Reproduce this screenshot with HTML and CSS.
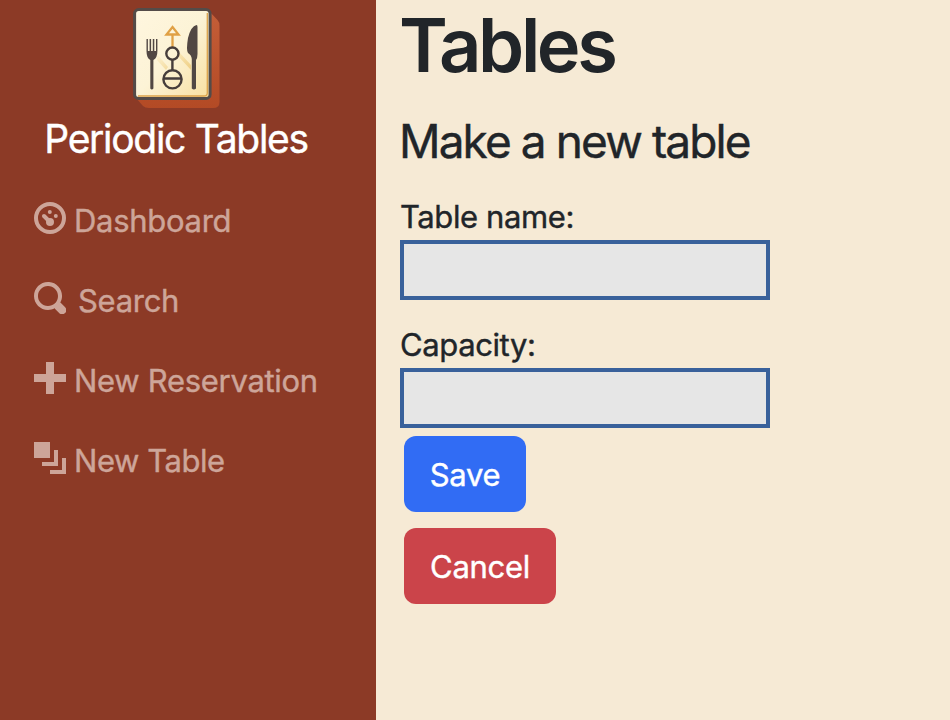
FILE: index.html
```html
<!DOCTYPE html>
<html lang="en">
<head>
<meta charset="utf-8">
<title>Periodic Tables</title>
<link rel="stylesheet" href="styles.css">
</head>
<body>
<div class="layout">
  <nav class="sidebar">
    <a class="brand">
      <svg class="logo" viewBox="0 0 105 115" width="105" height="115" aria-hidden="true">
        <defs>
          <linearGradient id="paper" x1="0" y1="0" x2="1" y2="1"><stop offset="0" stop-color="#fff6df"/><stop offset=".5" stop-color="#fcf3d6"/><stop offset="1" stop-color="#f8dfa0"/></linearGradient>
          <linearGradient id="side" x1="0" y1="0" x2="0" y2="1"><stop offset="0" stop-color="#c45e38"/><stop offset="1" stop-color="#b34a25"/></linearGradient>
          <linearGradient id="beam" x1="0" y1="0" x2="1" y2="1"><stop offset="0" stop-color="#f2d184" stop-opacity="0"/><stop offset="1" stop-color="#efcf85"/></linearGradient>
        </defs>
        <path d="M84 11 92.500 20Q94.500 22 94.500 26V102Q94.500 108 88 108H24Q20 108 18 106L11 98Z" fill="url(#side)"/>
        <rect x="9.600" y="9.600" width="75.500" height="88.800" rx="4" fill="url(#paper)" stroke="#544b48" stroke-width="3"/>
        <path d="M82.300 13V93Q82.300 96 79 96H13" fill="none" stroke="#dca34b" stroke-width="1.300"/>
        <path d="M32 54 43 67 41 70 32 60ZM54 52 66 65V70L53 56Z" fill="url(#beam)"/>
        <g fill="none" stroke="#e0a044" stroke-width="2.300"><path d="M47.500 27 53.500 34.500H41.500ZM47.500 35V48"/></g>
        <g fill="none" stroke="#463d3b" stroke-width="2.400"><circle cx="47.400" cy="53.600" r="6.100"/><path d="M47.400 60V70M38.500 78.500H56.500"/><circle cx="47.500" cy="79.300" r="9.100"/></g>
        <g fill="#514743"><path d="M21.500 39V51Q21.500 58 25.300 60V88.500Q26.800 90.500 28.400 88.500V60Q32.400 58 32.400 51V39H31V51H29.300V39H27.800V51H26.100V39H24.600V51H22.900V39Z"/><path d="M71.500 25Q66 26 63 38Q61 50 63 53Q66.500 55 66.800 59V88.500Q69 90.500 71 88.500V60Q72.500 58 72.500 54V27Q72.500 25 71.500 25Z"/></g>
      </svg>
      <span class="brand-text">Periodic Tables</span>
    </a>
    <ul class="menu">
      <li><a class="link"><svg class="icon" viewBox="0 0 8 8"><path fill-rule="evenodd" d="M4 0a4 4 0 1 0 0 8 4 4 0 0 0 0-8zM4 1a3 3 0 1 1 0 6 3 3 0 0 1 0-6z"/><circle cx="3.950" cy="2.500" r=".5"/><circle cx="5.450" cy="3.500" r=".5"/><circle cx="4" cy="5" r="1"/><path d="M2.500 3.500 4 5" fill="none" stroke="currentColor" stroke-linecap="round"/></svg><span class="t-dashboard">Dashboard</span></a></li>
      <li><a class="link"><svg class="icon" viewBox="0 0 8 8"><path d="M3.500 0c-1.930 0-3.500 1.570-3.500 3.500s1.570 3.500 3.500 3.500c.59 0 1.170-.14 1.660-.41a1 1 0 0 0 .13.13l1 1a1.020 1.020 0 1 0 1.440-1.440l-1-1a1 1 0 0 0-.16-.13c.27-.49.44-1.060.44-1.660 0-1.930-1.550-3.500-3.500-3.500zm0 1c1.390 0 2.500 1.110 2.500 2.500 0 .66-.24 1.270-.66 1.720l-.03.03a1 1 0 0 0-.13.13c-.44.4-1.040.63-1.690.63-1.390 0-2.500-1.110-2.500-2.500s1.110-2.500 2.500-2.500z"/></svg><span class="t-search">Search</span></a></li>
      <li><a class="link"><svg class="icon" viewBox="0 0 8 8"><path d="M3 0v3h-3v2h3v3h2v-3h3v-2h-3v-3z"/></svg><span class="t-reservation">New Reservation</span></a></li>
      <li><a class="link"><svg class="icon" viewBox="0 0 8 8"><path d="M0 0v4h4v-4zM5 2v3h-3v1h4v-4zM7 4v3h-3v1h4v-4z"/></svg><span class="t-table">New Table</span></a></li>
    </ul>
  </nav>
  <main class="content">
    <h1>Tables</h1>
    <h2>Make a new table</h2>
    <form>
      <label for="name">Table name:</label>
      <input id="name" type="text">
      <label class="capacity" for="capacity">Capacity:</label>
      <input id="capacity" type="text">
      <div class="actions">
        <button class="save" type="button">Save</button>
        <button class="cancel" type="button">Cancel</button>
      </div>
    </form>
  </main>
</div>
</body>
</html>
```
FILE: styles.css
```css
* { box-sizing: border-box; }
body { margin: 0; font: 400 31px/48px Inter, sans-serif; color: #212529; background: #f6ead5; -webkit-text-stroke: .4px currentColor; }
.layout { display: flex; height: 720px; overflow: hidden; }
.sidebar { width: 376px; flex: none; background: #8c3a26; }
.brand { display: flex; flex-direction: column; align-items: center; width: 352px; height: 180px; color: #fff; }
.logo { display: block; flex: none; margin-left: 3px; }
.brand-text { font-size: 39px; line-height: 48px; letter-spacing: -1.3px; white-space: nowrap; }
.menu { list-style: none; margin: 0; padding: 0 0 0 34px; }
.link { display: flex; gap: 8px; height: 80px; color: #cda599; white-space: nowrap; line-height: 81px; letter-spacing: -.3px; }
.icon { width: 32px; height: 32px; flex: none; margin-top: 22px; fill: currentColor; }
.t-search { margin-left: 4px; }
.t-table { letter-spacing: -.45px; }
.content { flex: 1; padding-left: 24px; }
h1 { margin: 0 0 0 -1px; font-size: 74px; line-height: 90px; font-weight: 600; letter-spacing: -3.4px; -webkit-text-stroke: 0; }
h2 { margin: 24px 0 23px -1px; font-size: 46px; line-height: 55px; font-weight: 400; letter-spacing: -1.9px; }
label { display: block; height: 48px; line-height: 50px; letter-spacing: -.4px; }
.capacity { margin-top: 20px; }
input { display: block; width: 370px; height: 60px; border: 4px solid #39619b; border-radius: 0; background: #e6e6e6; padding: 4px 8px; font: inherit; outline: none; }
.actions { display: flex; flex-direction: column; align-items: flex-start; gap: 16px; padding: 8px 4px; }
button { height: 76px; border: 0; border-radius: 12px; color: #fff; font: inherit; letter-spacing: -.3px; padding: 2px 0 0; -webkit-text-stroke: .4px #fff; }
.save { width: 122px; background: #316cf4; }
.cancel { width: 152px; background: #cb444a; }
```
